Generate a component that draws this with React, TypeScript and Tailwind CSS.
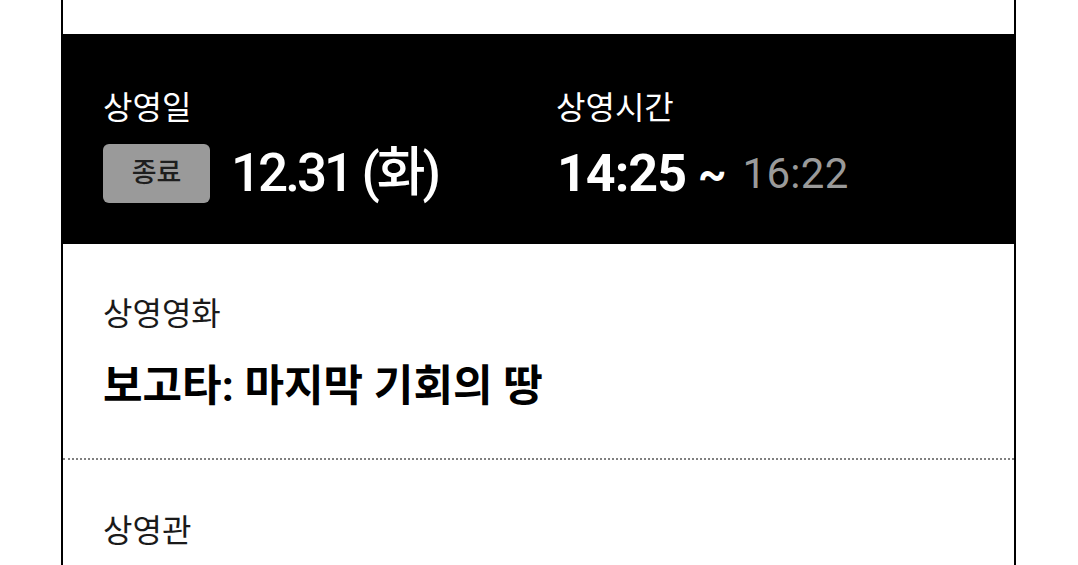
// App.tsx — screening ticket detail card

const font = "font-['Roboto','Noto_Sans_CJK_KR',sans-serif]";

export default function App() {
  return (
    <div className={`min-h-screen bg-white ${font}`}>
      <div className="w-[955px] ml-[61px] border-x-2 border-black">
        <div className="h-[34px]" />

        {/* date / time band */}
        <div className="bg-black h-[210px] pt-[54px] pl-[40px] flex">
          <div className="w-[454px] flex flex-col">
            <p className="text-white text-[32px] leading-[40px]">상영일</p>
            <div className="mt-[16px] flex items-center h-[59px]">
              <span className="w-[107px] h-[59px] rounded-md bg-[#9a9a9a] text-[#1e1e1e] text-[27px] font-medium flex items-center justify-center">
                종료
              </span>
              <span className="ml-[21px] text-white text-[53px] font-medium tracking-[-3px] leading-none">
                12.31 (화)
              </span>
            </div>
          </div>
          <div className="flex flex-col">
            <p className="text-white text-[32px] leading-[40px] -ml-[1px]">상영시간</p>
            <div className="mt-[16px] flex items-center h-[59px] leading-none">
              <span className="text-white text-[52px] font-bold tracking-[-1px]">14:25</span>
              <span className="ml-[12px] text-white text-[44px] font-bold">~</span>
              <span className="ml-[16px] text-[#9a9a9a] text-[42px] tracking-[0.3px]">16:22</span>
            </div>
          </div>
        </div>

        {/* movie */}
        <div className="px-[40px] pt-[50px] pb-[44px] border-b-2 border-dotted border-[#808080]">
          <p className="text-[#1a1a1a] text-[32px] leading-[40px]">상영영화</p>
          <h2 className="mt-[24px] text-black text-[43px] font-bold leading-[56px]">
            보고타: 마지막 기회의 땅
          </h2>
        </div>

        {/* theater */}
        <div className="px-[40px] pt-[51px] pb-[40px]">
          <p className="text-[#1a1a1a] text-[32px] leading-[40px]">상영관</p>
        </div>
      </div>
    </div>
  );
}
